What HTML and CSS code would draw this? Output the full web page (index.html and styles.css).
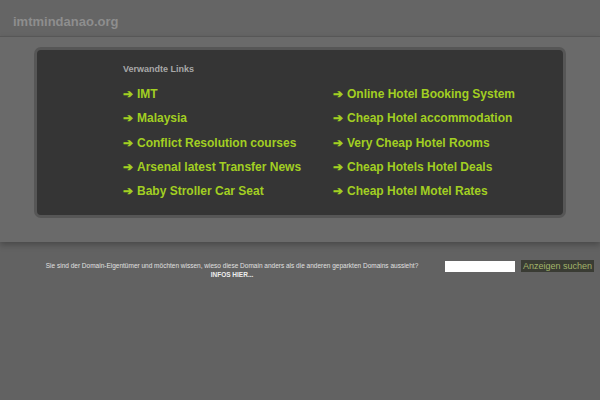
FILE: index.html
```html
<!DOCTYPE html>
<html>
<head>
<meta charset="utf-8">
<link rel="stylesheet" href="styles.css">
</head>
<body>
<div class="header"><span class="domain">imtmindanao.org</span></div>
<div class="band">
  <div class="panel">
    <div class="heading">Verwandte Links</div>
    <div class="links">
      <a class="link"><span class="arrow">➔</span>IMT</a>
      <a class="link"><span class="arrow">➔</span>Online Hotel Booking System</a>
      <a class="link"><span class="arrow">➔</span>Malaysia</a>
      <a class="link"><span class="arrow">➔</span>Cheap Hotel accommodation</a>
      <a class="link"><span class="arrow">➔</span>Conflict Resolution courses</a>
      <a class="link"><span class="arrow">➔</span>Very Cheap Hotel Rooms</a>
      <a class="link"><span class="arrow">➔</span>Arsenal latest Transfer News</a>
      <a class="link"><span class="arrow">➔</span>Cheap Hotels Hotel Deals</a>
      <a class="link"><span class="arrow">➔</span>Baby Stroller Car Seat</a>
      <a class="link"><span class="arrow">➔</span>Cheap Hotel Motel Rates</a>
    </div>
  </div>
</div>
<div class="footer">
  <div class="owner">
    <div class="question">Sie sind der Domain-Eigentümer und möchten wissen, wieso diese Domain anders als die anderen geparkten Domains aussieht?</div>
    <div class="infos">INFOS HIER...</div>
  </div>
  <div class="search">
    <input class="field" type="text">
    <button class="btn">Anzeigen suchen</button>
  </div>
</div>
</body>
</html>
```
FILE: styles.css
```css
html, body {
  margin: 0;
  padding: 0;
  background: #626262;
  font-family: "Liberation Sans", Arial, sans-serif;
}
.header {
  height: 36px;
  background: #656565;
  padding-left: 13px;
  box-sizing: border-box;
  padding-top: 15px;
}
.domain {
  font-size: 13px;
  font-weight: bold;
  color: #8e8e8e;
  line-height: 14px;
  display: block;
}
.band {
  background: #6a6a6a;
  border-top: 1px solid #575757;
  padding: 10px 34px 24px 34px;
  box-shadow: 0 3px 6px rgba(0,0,0,0.25);
  position: relative;
}
.panel {
  background: #353535;
  border: 3px solid #565656;
  border-radius: 7px;
  padding: 13px 0 0 86px;
  height: 171px;
  box-sizing: border-box;
}
.heading {
  font-size: 9px;
  font-weight: bold;
  color: #a8a8a8;
  line-height: 12px;
  margin-bottom: 7px;
}
.links {
  display: grid;
  grid-template-columns: 210px auto;
}
.link {
  font-size: 12px;
  font-weight: bold;
  color: #a2cf22;
  line-height: 24.3px;
  white-space: nowrap;
}
.arrow {
  margin-right: 4px;
}
.footer {
  display: flex;
  align-items: flex-start;
  padding-top: 19px;
}
.owner {
  flex: 0 0 426px;
  padding-left: 19px;
  text-align: center;
  font-size: 6.5px;
  color: #e0e0e0;
  line-height: 9px;
}
.question {
  white-space: nowrap;
}
.infos {
  font-weight: bold;
  color: #eeeeee;
}
.search {
  display: flex;
  align-items: center;
  gap: 6px;
  margin-top: -1px;
}
.field {
  width: 70px;
  height: 11px;
  border: 0;
  padding: 0;
  background: #ffffff;
  display: block;
}
.btn {
  background: #3a3c34;
  color: #a3b56a;
  border: 0;
  font-family: "Liberation Sans", Arial, sans-serif;
  font-size: 9px;
  height: 12px;
  line-height: 12px;
  padding: 0 2px;
  white-space: nowrap;
  display: block;
}
```
